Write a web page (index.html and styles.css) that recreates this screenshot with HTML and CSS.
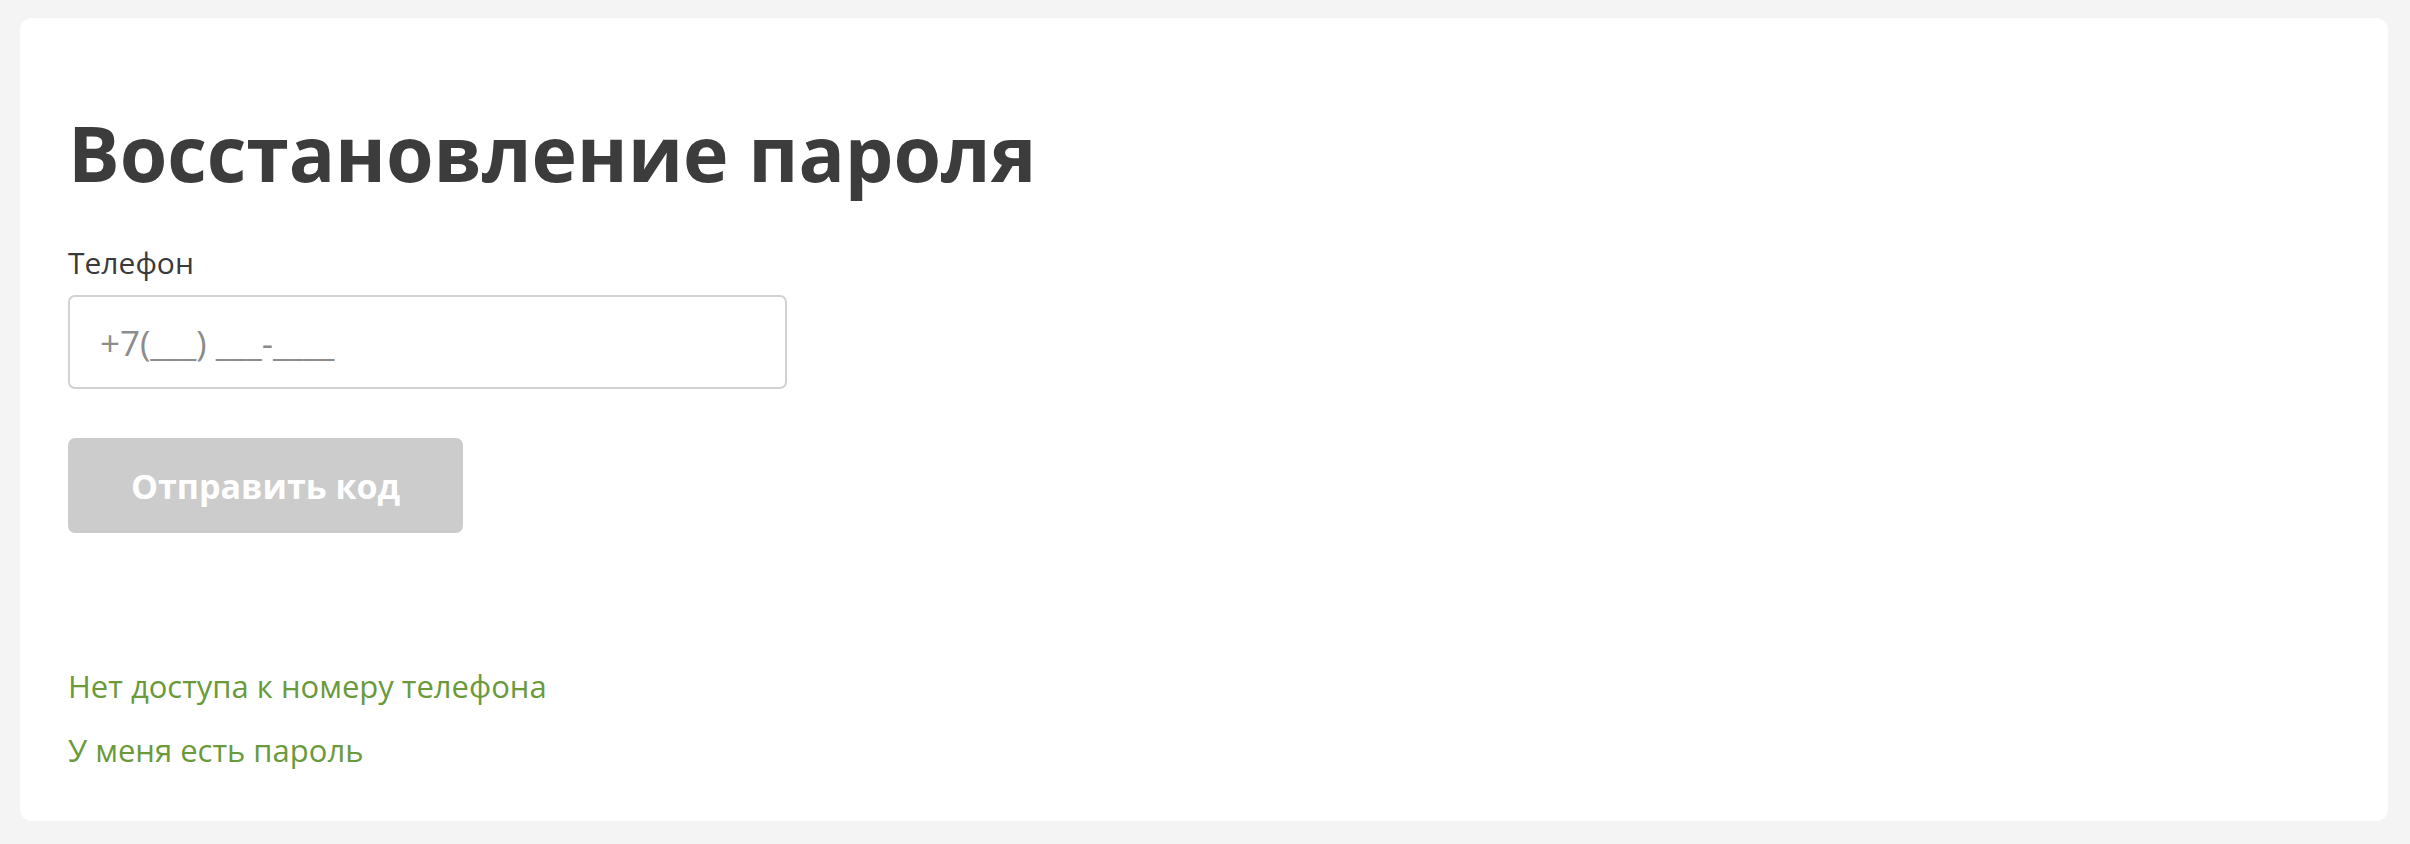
FILE: index.html
```html
<!DOCTYPE html>
<html lang="ru">
<head>
    <meta charset="UTF-8">
    <meta name="viewport" content="width=device-width, initial-scale=1.0">
    <title>Восстановление пароля</title>
    <link rel="stylesheet" href="styles.css">
</head>
<body>
    <div class="recovery-card">
        <h1 class="title">Восстановление пароля</h1>

        <form class="recovery-form" id="recoveryForm">
            <div class="form-group">
                <label for="phone">Телефон</label>
                <input type="tel" id="phone" name="phone" placeholder="+7(___) ___-____">
            </div>

            <button type="submit" class="send-btn" disabled>Отправить код</button>
        </form>

        <div class="footer-links">
            <a href="#">Нет доступа к номеру телефона</a>
            <a href="#">У меня есть пароль</a>
        </div>
    </div>
</body>
</html>
```

FILE: styles.css
```css
* {
    margin: 0;
    padding: 0;
    box-sizing: border-box;
}

html, body {
    height: 100%;
}

body {
    font-family: "Open Sans", "Noto Sans", sans-serif;
    background: #f4f4f4;
    padding: 18px 22px 23px 20px;
    display: flex;
    flex-direction: column;
}

.recovery-card {
    flex: 1;
    background: #fff;
    border-radius: 12px;
    padding: 89px 48px 0;
    display: flex;
    flex-direction: column;
}

.title {
    font-size: 77px;
    font-weight: 700;
    line-height: 1.2;
    letter-spacing: -0.1px;
    color: #3c3c3c;
}

.recovery-form {
    margin-top: 46px;
    display: flex;
    flex-direction: column;
    align-items: flex-start;
}

.form-group {
    display: flex;
    flex-direction: column;
}

label {
    font-size: 30px;
    line-height: 36px;
    color: #3a3a3a;
    margin-bottom: 14px;
}

input[type="tel"] {
    width: 719px;
    height: 94px;
    padding: 0 30px;
    border: 2px solid #d2d2d2;
    border-radius: 7px;
    font-family: inherit;
    font-size: 35px;
    color: #333;
    background: #fff;
}

input[type="tel"]::placeholder {
    color: #8c8c8c;
}

input[type="tel"]:focus {
    outline: none;
    border-color: #6a9a3a;
}

.send-btn {
    margin-top: 49px;
    width: 395px;
    height: 95px;
    background: #cccccc;
    color: #fff;
    border: none;
    border-radius: 7px;
    font-family: inherit;
    font-size: 34px;
    font-weight: 700;
}

.footer-links {
    margin-top: 131px;
    display: flex;
    flex-direction: column;
    align-items: flex-start;
    gap: 19px;
}

.footer-links a {
    color: #6a9a3a;
    text-decoration: none;
    font-size: 31px;
    line-height: 45px;
}

.footer-links a:hover {
    text-decoration: underline;
}
```
